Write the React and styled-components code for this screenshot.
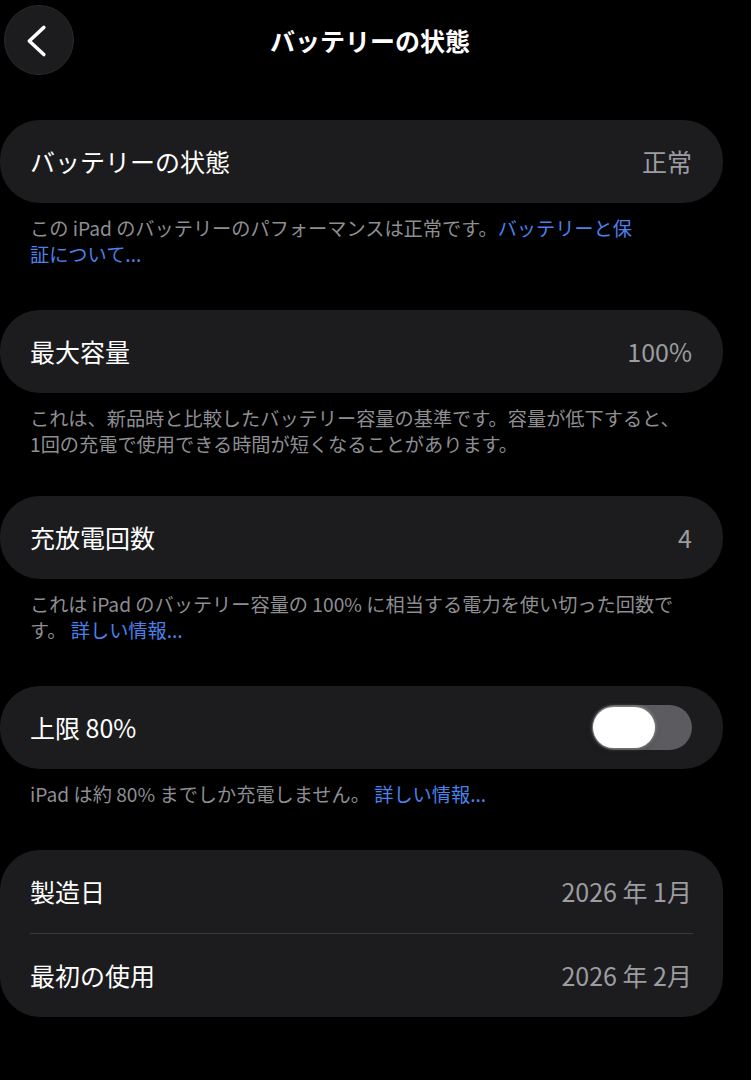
import React from "react";
import styled, { createGlobalStyle } from "styled-components";

const Global = createGlobalStyle`
  html, body {
    margin: 0;
    padding: 0;
    background: #000;
  }
  body {
    font-family: "Noto Sans CJK JP", "Noto Sans", "Liberation Sans", sans-serif;
    color: #fff;
    -webkit-font-smoothing: antialiased;
  }
`;

const Page = styled.div`
  width: 751px;
  min-height: 1080px;
  background: #000;
  display: flex;
  flex-direction: column;
`;

const Header = styled.header`
  width: 736px;
  height: 80px;
  display: grid;
  grid-template-columns: 1fr auto 1fr;
  align-items: center;
  padding: 0 0 0 4px;
  box-sizing: border-box;
  margin-bottom: 40px;
`;

const BackButton = styled.button`
  width: 70px;
  height: 70px;
  border-radius: 50%;
  background: #1c1c1e;
  border: 1px solid #2a2a2c;
  box-sizing: border-box;
  display: flex;
  align-items: center;
  justify-content: center;
  padding: 0;
  justify-self: start;
  cursor: pointer;
`;

const Title = styled.h1`
  margin: 0;
  font-size: 25px;
  font-weight: 700;
  color: #fff;
  line-height: 1;
`;

const Section = styled.section`
  display: flex;
  flex-direction: column;
  margin-bottom: ${(p) => p.$gap ?? 43}px;
`;

const Card = styled.div`
  width: 723px;
  background: #1c1c1e;
  border-radius: 40px;
  display: flex;
  flex-direction: column;
`;

const Row = styled.div`
  height: 83px;
  display: flex;
  align-items: center;
  justify-content: space-between;
  padding: 0 31px 0 30px;
  box-sizing: border-box;
`;

const Divider = styled.div`
  height: 1px;
  background: #3a3a3c;
  margin: 0 30px;
`;

const Label = styled.span`
  font-size: 25px;
  font-weight: 400;
  color: #fff;
  line-height: 1;
`;

const Value = styled.span`
  font-size: 25px;
  font-weight: 400;
  color: #9c9ca1;
  line-height: 1;
`;

const Footer = styled.p`
  margin: 12px 0 0 0;
  padding: 0 0 0 30px;
  font-size: 19.2px;
  line-height: 26px;
  color: #8e8e93;
  white-space: nowrap;
`;

const Link = styled.a`
  color: #4a82ea;
  text-decoration: none;
  cursor: pointer;
`;

const Track = styled.div`
  width: 100px;
  height: 45px;
  border-radius: 23px;
  background: #5c5c60;
  position: relative;
  flex: none;
`;

const Knob = styled.div`
  position: absolute;
  left: 1px;
  top: 2px;
  width: 62px;
  height: 41px;
  border-radius: 21px;
  background: #fff;
  box-shadow: 0 0 4px rgba(255, 255, 255, 0.55), 0 2px 6px rgba(0, 0, 0, 0.35);
`;

function Chevron() {
  return (
    <svg width="70" height="70" viewBox="0 0 70 70" fill="none">
      <polyline
        points="40,22 25,36 40,50"
        stroke="#fff"
        strokeWidth="3.6"
        strokeLinecap="round"
        strokeLinejoin="round"
      />
    </svg>
  );
}

function Toggle() {
  return (
    <Track role="switch" aria-checked="false">
      <Knob />
    </Track>
  );
}

export default function App() {
  return (
    <>
      <Global />
      <Page>
        <Header>
          <BackButton aria-label="戻る">
            <Chevron />
          </BackButton>
          <Title>バッテリーの状態</Title>
          <span />
        </Header>

        <Section $gap={43}>
          <Card>
            <Row>
              <Label>バッテリーの状態</Label>
              <Value>正常</Value>
            </Row>
          </Card>
          <Footer>
            この iPad のバッテリーのパフォーマンスは正常です。<Link>バッテリーと保</Link>
            <br />
            <Link>証について...</Link>
          </Footer>
        </Section>

        <Section $gap={39}>
          <Card>
            <Row>
              <Label>最大容量</Label>
              <Value>100%</Value>
            </Row>
          </Card>
          <Footer>
            これは、新品時と比較したバッテリー容量の基準です。容量が低下すると、
            <br />
            1回の充電で使用できる時間が短くなることがあります。
          </Footer>
        </Section>

        <Section $gap={43}>
          <Card>
            <Row>
              <Label>充放電回数</Label>
              <Value>4</Value>
            </Row>
          </Card>
          <Footer>
            これは iPad のバッテリー容量の 100% に相当する電力を使い切った回数で
            <br />
            す。 <Link>詳しい情報...</Link>
          </Footer>
        </Section>

        <Section $gap={43}>
          <Card>
            <Row>
              <Label>上限 80%</Label>
              <Toggle />
            </Row>
          </Card>
          <Footer>
            iPad は約 80% までしか充電しません。 <Link>詳しい情報...</Link>
          </Footer>
        </Section>

        <Section $gap={0}>
          <Card>
            <Row>
              <Label>製造日</Label>
              <Value>2026 年 1月</Value>
            </Row>
            <Divider />
            <Row>
              <Label>最初の使用</Label>
              <Value>2026 年 2月</Value>
            </Row>
          </Card>
        </Section>
      </Page>
    </>
  );
}
